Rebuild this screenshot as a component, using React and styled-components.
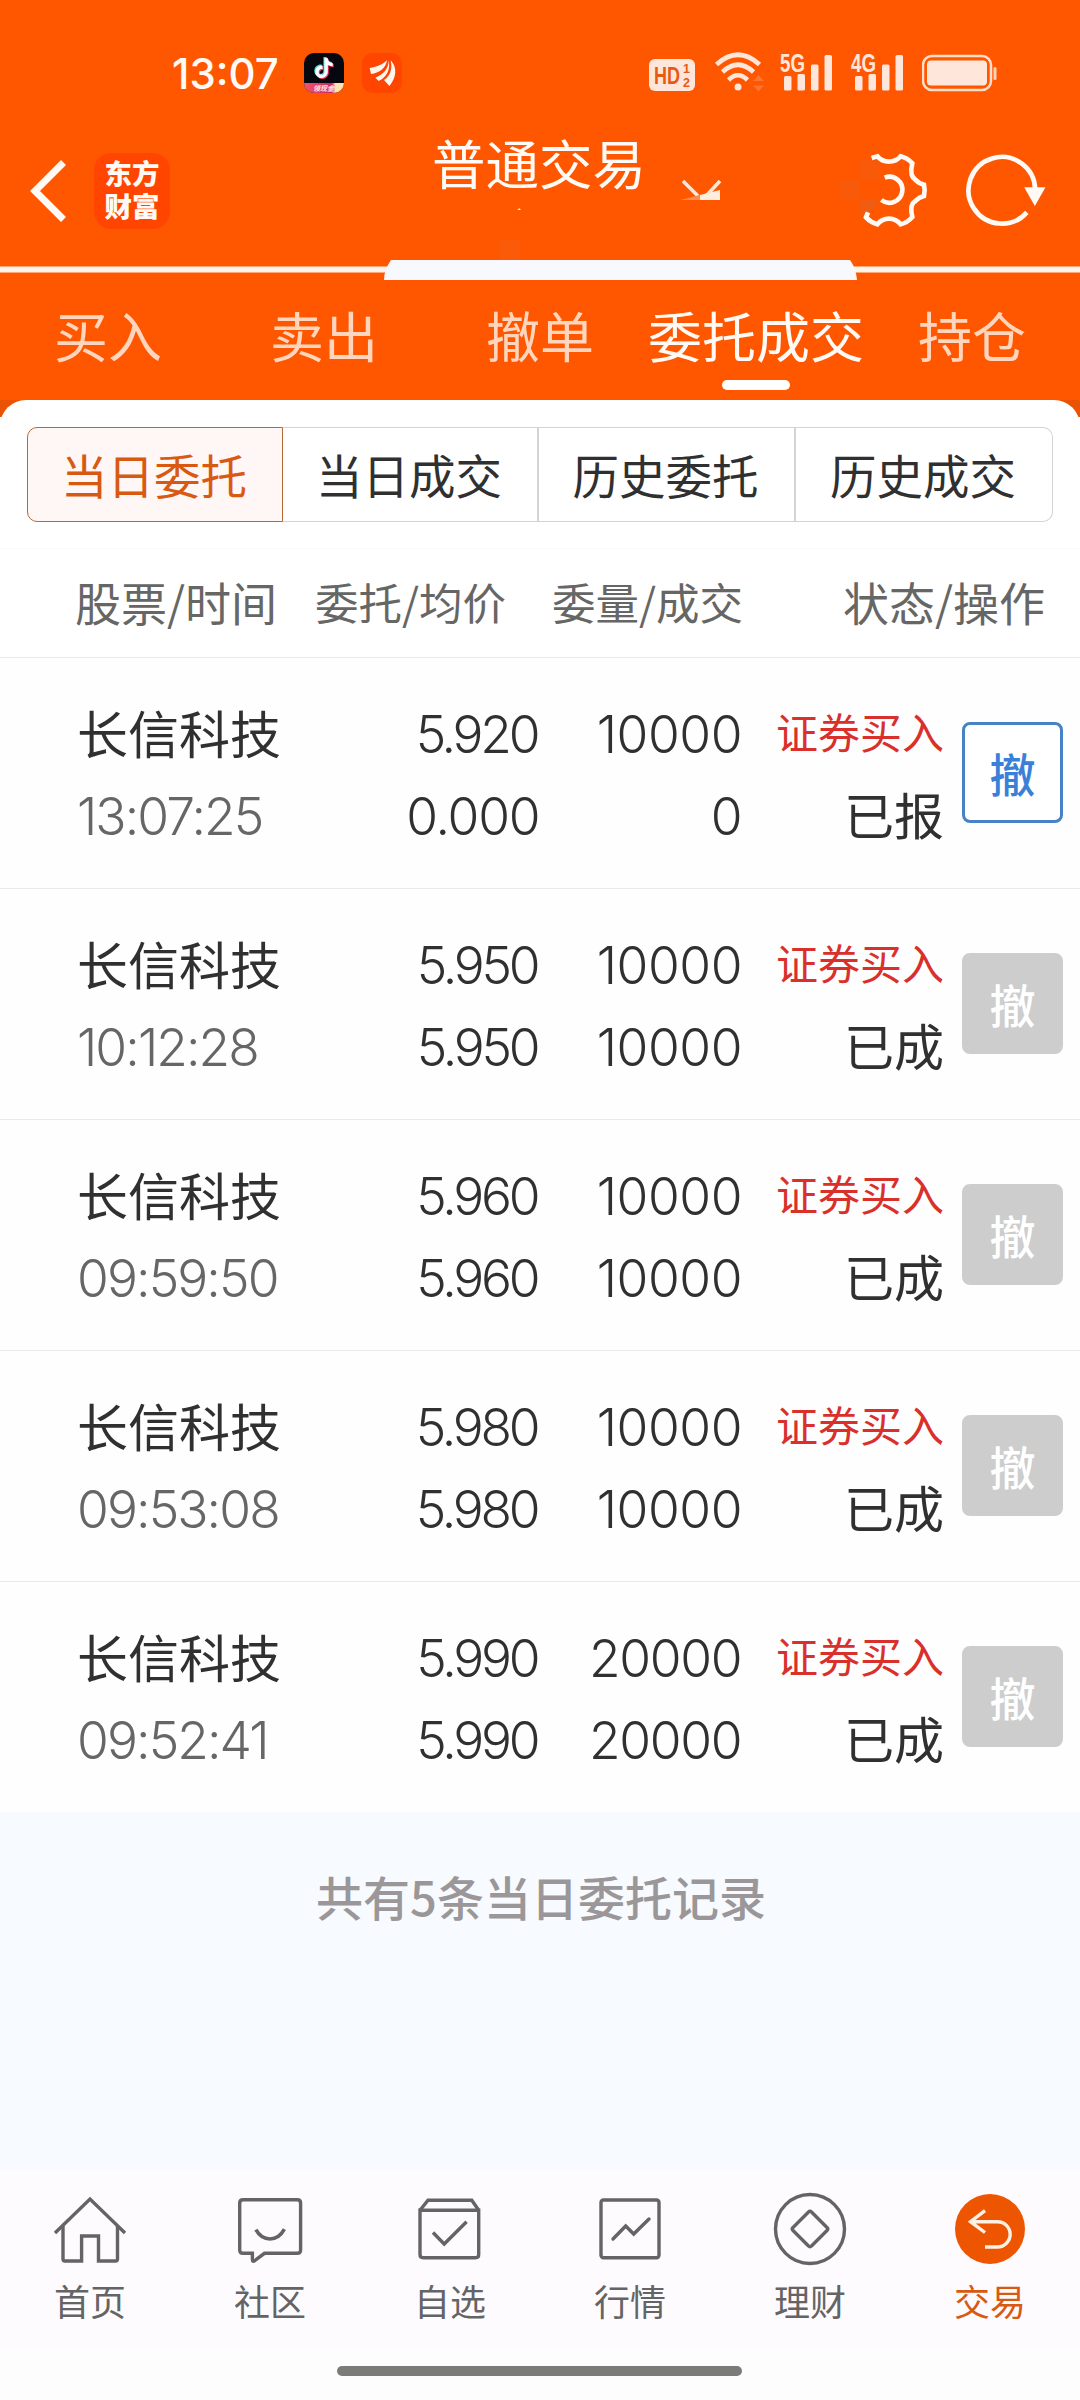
import React from 'react';
import styled, { createGlobalStyle } from 'styled-components';
import { SiTiktok } from 'react-icons/si';

const GlobalStyle = createGlobalStyle`
  * {
    box-sizing: border-box;
  }

  body {
    margin: 0;
    background: #fdfdfd;
    font-family: 'Noto Sans CJK SC', sans-serif;
    color: #303030;
  }

  svg {
    display: block;
    flex-shrink: 0;
  }
`;

const Page = styled.div`
  width: 1080px;
  height: 2400px;
  display: flex;
  flex-direction: column;
  overflow: hidden;
`;

const Header = styled.header`
  height: 400px;
  background: #ff5700;
  color: #fffaf5;
`;

const StatusBar = styled.div`
  height: 96px;
  padding: 50px 82px 0 172px;
  display: flex;
  align-items: flex-start;
`;

const Clock = styled.div`
  width: 132px;
  font-family: Inter, sans-serif;
  font-size: 42px;
  font-weight: 500;
  line-height: 47px;
  letter-spacing: 0;
  white-space: nowrap;
`;

const AppBadge = styled.div`
  position: relative;
  width: 40px;
  height: 40px;
  margin: 3px 18px 0 0;
  border-radius: 10px;
  background: ${(props) => props.$bg};
  overflow: hidden;
`;

const Note = styled(SiTiktok)`
  position: absolute;
  left: ${(props) => props.$x}px;
  top: ${(props) => props.$y}px;
  width: 20px;
  height: 22px;
  color: ${(props) => props.$color};
`;

const Ribbon = styled.div`
  position: absolute;
  left: 0;
  bottom: 0;
  width: 40px;
  height: 10px;
  padding-left: 9px;
  background: linear-gradient(90deg, #f0566e, #d3225f 70%, #fde3b4 78%);
  color: #ffe9ee;
  font-size: 7px;
  font-weight: 700;
  font-style: italic;
  line-height: 10px;
`;

const StatusIcons = styled.div`
  margin-left: auto;
  display: flex;
`;

const SignalSvg = styled.svg`
  margin: -10px 0 0 -2px;
`;

const NavBar = styled.div`
  position: relative;
  height: 164px;
  padding: 0 30px;
  display: flex;
  align-items: flex-start;
`;

const Specks = styled.svg`
  position: absolute;
  left: 500px;
  top: 110px;
`;

const BackIcon = styled.svg`
  margin-top: 64px;
`;

const Brand = styled.div`
  width: 76px;
  height: 76px;
  margin: 57px 0 0 28px;
  padding-top: 3px;
  border-radius: 17px;
  background: #ff4500;
  font-size: 27.5px;
  font-weight: 900;
  line-height: 33px;
  text-align: center;
`;

const Title = styled.h1`
  width: 216px;
  margin: 26px 0 0 262px;
  font-size: 53.5px;
  font-weight: 400;
  line-height: 80px;
  white-space: nowrap;
`;

const ArrowIcon = styled.svg`
  margin: 79px 0 0 30px;
`;

const GearIcon = styled.svg`
  margin: 54px 0 0 118px;
`;

const RefreshIcon = styled.svg`
  margin: 54px 0 0 33px;
`;

const Seam = styled.svg`
  display: block;
`;

const Tabs = styled.nav`
  height: 120px;
  display: flex;
`;

const Tab = styled.div`
  flex: 1;
  display: flex;
  flex-direction: column;
  align-items: center;
  padding-top: 15px;
  font-size: 54px;
  line-height: 80px;
  white-space: nowrap;
  color: ${(props) => (props.$active ? '#fffaf5' : '#ffd6bd')};

  &::after {
    content: '';
    width: 68px;
    height: 10px;
    margin-top: 5px;
    border-radius: 5px;
    background: ${(props) => (props.$active ? '#ffffff' : 'transparent')};
  }
`;

const Corners = styled.div`
  background: linear-gradient(#ea5304 17px, #ffffff 17px);
`;

const Panel = styled.div`
  height: 149px;
  padding: 27px 27px 0;
  border-radius: 26px 26px 0 0;
  background: #ffffff;
  border-bottom: 1px solid #fafafa;
`;

const Segments = styled.div`
  height: 95px;
  display: grid;
  grid-template-columns: 256px 256px 257px 257px;
`;

const Segment = styled.div`
  padding: 0 2px 3px 0;
  display: flex;
  align-items: center;
  justify-content: center;
  font-size: 46.5px;
  border: 1px solid #d3d3d8;
  border-right-width: 2px;
  border-left-width: 0;
  white-space: nowrap;

  &:first-child {
    border-radius: 10px 0 0 10px;
  }

  &:last-child {
    border-radius: 0 10px 10px 0;
    border-right-width: 1px;
  }

  ${(props) =>
    props.$active &&
    `
    color: #d85a12;
    background: #fff6f6;
    border: 1px solid #b9683a;
  `}
`;

const Row = styled.div`
  display: grid;
  grid-template-columns: 202px 260px 202px 203px 101px;
  padding-left: 77px;
`;

const TableHead = styled(Row)`
  height: 108px;
  grid-template-columns: 200px 231px 237px 302px;
  padding-left: 75px;
  align-items: center;
  background: #ffffff;
  color: #666665;
  line-height: 105px;
  white-space: nowrap;
`;

const HeadCell = styled.div`
  align-self: start;
  font-size: ${(props) => props.$size || 46}px;
  text-align: ${(props) => props.$align || 'right'};
`;

const OrderRow = styled(Row)`
  height: 231px;
  padding-top: 32px;
  border-top: 1px solid #e9e9e9;
  background: #fefefe;
`;

const Cell = styled.div`
  display: flex;
  flex-direction: column;
  align-items: ${(props) => (props.$left ? 'flex-start' : 'flex-end')};
  line-height: 82px;
  white-space: nowrap;
`;

const Name = styled.span`
  height: 82px;
  padding-top: 1px;
  font-size: 51px;
`;

const Num = styled.span`
  height: 82px;
  padding-top: 3px;
  margin-right: ${(props) => -1.6 - props.$track}px;
  font-family: Inter, sans-serif;
  font-size: 51.5px;
  font-weight: 350;
  letter-spacing: ${(props) => props.$track}px;
  color: ${(props) => (props.$muted ? '#666666' : '#303030')};
`;

const Side = styled.span`
  height: 82px;
  font-size: 42px;
  color: #d9302b;
`;

const State = styled.span`
  height: 82px;
  font-size: 50px;
`;

const CancelButton = styled.button`
  width: 101px;
  height: 101px;
  margin: 32px 0 0 18px;
  padding: 0 0 1px;
  border: 3px solid ${(props) => (props.$enabled ? '#4583c6' : '#cdcdcd')};
  border-radius: 8px;
  background: ${(props) => (props.$enabled ? '#ffffff' : '#cdcdcd')};
  color: ${(props) => (props.$enabled ? '#3a80d8' : '#ffffff')};
  font-family: inherit;
  font-size: 46px;
  font-weight: 500;
`;

const Summary = styled.div`
  height: 358px;
  padding: 46px 0 0 2px;
  background: #f7faff;
  color: #9b9798;
  font-size: 47px;
  font-weight: 500;
  line-height: 76px;
  text-align: center;
`;

const BottomNav = styled.nav`
  height: 176px;
  padding-top: 20px;
  display: flex;
  background: #fefbff;
`;

const NavItem = styled.div`
  flex: 1;
  display: flex;
  flex-direction: column;
  align-items: center;
  font-size: 36px;
  line-height: 60px;
  color: ${(props) => (props.$active ? '#d85a12' : '#646464')};
`;

const HomeBar = styled.div`
  width: 405px;
  height: 10px;
  margin: 20px 0 0 337px;
  border-radius: 5px;
  background: #7b7c78;
`;

const SignalIcon = ({ label }) => (
  <SignalSvg width="73" height="55" viewBox="-2 -10 73 55" fill="#ffe6da">
    <text
      x="0"
      y="22"
      fontFamily="Liberation Sans, sans-serif"
      fontWeight="700"
      fontSize="26"
      textLength="25"
      lengthAdjust="spacingAndGlyphs"
    >
      {label}
    </text>
    <rect x="4" y="26" width="7.5" height="14.5" rx="1.5" />
    <rect x="17.5" y="24" width="7.5" height="16.5" rx="1.5" />
    <rect x="31" y="14.5" width="7.5" height="26" rx="1.5" />
    <rect x="44.5" y="5" width="7.5" height="35.5" rx="1.5" />
  </SignalSvg>
);

const icons = {
  home: (
    <>
      <path d="M5 43 40 9 75 43" />
      <path d="M13 36V69q0 2 2 2H31.6V46H48.5V71H65.500q2 0 2-2V36" />
    </>
  ),
  chat: (
    <>
      <path d="M13 9.700H67.300q3.300 0 3.300 3.300V60q0 3.300-3.300 3.300H34.500L25 70.500q-2.600 2-2.600-1V63.300H13q-3.300 0-3.300-3.300V13q0-3.300 3.300-3.300z" />
      <path d="M25.900 39.700Q31 49 40 49T54.400 39.200" strokeWidth="3.600" />
    </>
  ),
  picks: (
    <>
      <path d="M10 20.300V64.500q0 3.200 3.200 3.200H65.500q3.200 0 3.200-3.200V20.300z" />
      <path d="M10 20.300 18 10.300H61.800L68.700 20.300" />
      <path d="M23 42.500 34.200 54 56.600 31.700" />
    </>
  ),
  market: (
    <>
      <rect x="11" y="10" width="58" height="57.700" rx="2.500" />
      <path d="M23 49 35.700 36 43.700 44 59 29" strokeLinecap="round" />
    </>
  ),
  finance: (
    <>
      <circle cx="40" cy="39" r="34.500" />
      <path d="M38.500 22Q40 20.300 41.500 22L57 37.500Q58.500 39 57 40.500L41.500 56Q40 57.700 38.500 56L23 40.500Q21.500 39 23 37.500z" />
    </>
  ),
  trade: (
    <>
      <circle cx="40" cy="39" r="35" fill="#ee5500" stroke="none" />
      <path
        d="M35 20.700 20.500 31.700 35 42.500M21 31.700H47.500A12.500 12.500 0 0 1 47.500 57H35"
        stroke="#fff0e4"
      />
    </>
  ),
};

const tabs = ['买入', '卖出', '撤单', '委托成交', '持仓'];
const segments = ['当日委托', '当日成交', '历史委托', '历史成交'];

const orders = [
  { time: '13:07:25', price: '5.920', avg: '0.000', qty: '10000', filled: '0', state: '已报', open: true },
  { time: '10:12:28', price: '5.950', avg: '5.950', qty: '10000', filled: '10000', state: '已成' },
  { time: '09:59:50', price: '5.960', avg: '5.960', qty: '10000', filled: '10000', state: '已成' },
  { time: '09:53:08', price: '5.980', avg: '5.980', qty: '10000', filled: '10000', state: '已成' },
  { time: '09:52:41', price: '5.990', avg: '5.990', qty: '20000', filled: '20000', state: '已成' },
];

// leading digit decides how tight a figure is set
const tracking = { 0: -1.2, 1: -0.4, 2: -1.3, 5: -3.2 };

const navItems = [
  { icon: 'home', label: '首页' },
  { icon: 'chat', label: '社区' },
  { icon: 'picks', label: '自选' },
  { icon: 'market', label: '行情' },
  { icon: 'finance', label: '理财' },
  { icon: 'trade', label: '交易', active: true },
];

const Figure = ({ value }) => <Num $track={tracking[value[0]]}>{value}</Num>;

const App = () => {
  return (
    <>
      <GlobalStyle />
      <Page>
        <Header>
          <StatusBar>
            <Clock>13:07</Clock>
            <AppBadge $bg="#07080f">
              <Note $x={9} $y={3} $color="#35e0e0" />
              <Note $x={11} $y={5} $color="#f03060" />
              <Note $x={10} $y={4} $color="#ffffff" />
              <Ribbon>领现金</Ribbon>
            </AppBadge>
            <AppBadge $bg="#ff4500">
              <svg width="40" height="40" viewBox="216 24 120 120" fill="#fff6ee">
                <path d="M291 45C281 57 262 65 239 69L243 87C268 84 288 70 291 45z" />
                <path d="M296 46C296 70 282 88 256 98L266 108C290 98 302 74 296 46z" />
                <path d="M302 46C322 66 320 98 298 123L282 105C300 94 308 74 302 46z" />
              </svg>
            </AppBadge>
            <StatusIcons>
              <svg width="66" height="45" viewBox="0 0 66 45">
                <rect x="0" y="9" width="46" height="32" rx="6" fill="#ffe6da" />
                <g fill="#e85a14" fontFamily="Liberation Sans, sans-serif" fontWeight="700">
                  <text x="5" y="33.500" fontSize="24" textLength="26" lengthAdjust="spacingAndGlyphs">
                    HD
                  </text>
                  <text x="34" y="22.500" fontSize="12.500">1</text>
                  <text x="34" y="37" fontSize="12.500">2</text>
                </g>
              </svg>
              <svg width="65" height="45" viewBox="0 0 65 45" fill="none" stroke="#ffe6da" strokeWidth="4.600">
                <path d="M1.500 14.500Q23 -5 44.500 14.500" />
                <path d="M7.500 22Q23 7.500 38.500 22" />
                <path d="M13.500 30Q23 20.500 32.500 30" />
                <circle cx="23" cy="37" r="3.500" fill="#ffe6da" stroke="none" />
                <path d="M38 31 43.500 25 49 31zM38 35.500 43.500 41.500 49 35.500z" fill="#ff7430" stroke="none" />
              </svg>
              <SignalIcon label="5G" />
              <SignalIcon label="4G" />
              <svg width="76" height="45" viewBox="0 0 76 45">
                <rect x="1" y="6" width="68" height="34" rx="9" fill="none" stroke="#ffdfcc" strokeWidth="2.500" />
                <rect x="5" y="10.500" width="60" height="25" rx="4" fill="#ffe6da" />
                <rect x="71.500" y="17" width="3" height="13" rx="1.500" fill="#ffd2b8" />
              </svg>
            </StatusIcons>
          </StatusBar>

          <NavBar>
            <BackIcon width="36" height="62" viewBox="0 0 36 62" fill="none" stroke="#fffaf5" strokeWidth="7">
              <path d="M33.500 2.500 5 31 33.500 59.500" />
            </BackIcon>
            <Brand>
              东方
              <br />
              财富
            </Brand>
            <Title>普通交易</Title>
            <ArrowIcon width="44" height="30" viewBox="0 0 44 30">
              <path d="M5 6 20 21M42 6 29 20" stroke="#ffe6d4" strokeWidth="3.500" fill="none" />
              <path d="M2 25 22 20V25z" fill="#ff8a4c" />
              <path d="M22 20 42 15V25H22z" fill="#ffeedd" />
            </ArrowIcon>
            <GearIcon width="90" height="80" viewBox="540 0 270 240" fill="none" stroke="#fffaf5" strokeWidth="14">
              <path d="M540 90H600V30H640L660 45V90H600V150H540z" fill="#f85a0a" stroke="none" />
              <path d="M600 90H662V150H600z" fill="#ff5700" stroke="none" />
              <path d="M600 150H660Q645 175 625 190H600z" fill="#f05c12" stroke="none" />
              <path d="M635 24 652 19Q665 35 687 35T722 19Q742 24 757 40Q748 78 765 88Q776 100 792 104Q796 121 792 138Q776 142 765 154Q748 164 757 201Q742 218 722 223Q708 206 687 206T652 223Q632 217 618 202L624 187" />
              <path d="M674 83A39 39 0 1 1 664 150" />
            </GearIcon>
            <RefreshIcon width="87" height="80" viewBox="910 0 260 240" fill="none" stroke="#fffaf5" strokeWidth="14">
              <path d="M1126 118A100 100 0 1 0 1101 187" />
              <path d="M1093 112H1157L1125 168z" fill="#fffaf5" stroke="none" />
            </RefreshIcon>
            <Specks width="24" height="54" viewBox="0 0 24 54">
              <path d="M17 4 19.500 2 21 4z" fill="#ffe6d4" />
              <path d="M0 34H20V54H0z" fill="#fb5a09" />
            </Specks>
          </NavBar>

          {/* divider with the raised notch in the middle */}
          <Seam width="1080" height="20" viewBox="0 0 1080 20">
            <rect y="6.500" width="1080" height="6" fill="#fff4ec" />
            <path d="M384 20Q384 10 391 0H850Q856 8 857 20z" fill="#f7f9ff" />
          </Seam>

          <Tabs>
            {tabs.map((tab) => (
              <Tab key={tab} $active={tab === '委托成交'}>
                {tab}
              </Tab>
            ))}
          </Tabs>
        </Header>

        <Corners>
          <Panel>
            <Segments>
              {segments.map((item, index) => (
                <Segment key={item} $active={index === 0}>
                  {item}
                </Segment>
              ))}
            </Segments>
          </Panel>
        </Corners>

        <TableHead>
          <HeadCell $align="left">股票/时间</HeadCell>
          <HeadCell $size={43.5}>委托/均价</HeadCell>
          <HeadCell $size={43.5}>委量/成交</HeadCell>
          <HeadCell>状态/操作</HeadCell>
        </TableHead>

        {orders.map((order) => (
          <OrderRow key={order.time}>
            <Cell $left>
              <Name>长信科技</Name>
              <Num $muted $track={-1.9}>
                {order.time}
              </Num>
            </Cell>
            <Cell>
              <Figure value={order.price} />
              <Figure value={order.avg} />
            </Cell>
            <Cell>
              <Figure value={order.qty} />
              <Figure value={order.filled} />
            </Cell>
            <Cell>
              <Side>证券买入</Side>
              <State>{order.state}</State>
            </Cell>
            <CancelButton $enabled={order.open}>撤</CancelButton>
          </OrderRow>
        ))}

        <Summary>共有5条当日委托记录</Summary>

        <BottomNav>
          {navItems.map((item) => (
            <NavItem key={item.label} $active={item.active}>
              <svg width="80" height="80" viewBox="0 0 80 80" fill="none" stroke="#646464" strokeWidth="3.400">
                {icons[item.icon]}
              </svg>
              {item.label}
            </NavItem>
          ))}
        </BottomNav>
        <HomeBar />
      </Page>
    </>
  );
};

export default App;
